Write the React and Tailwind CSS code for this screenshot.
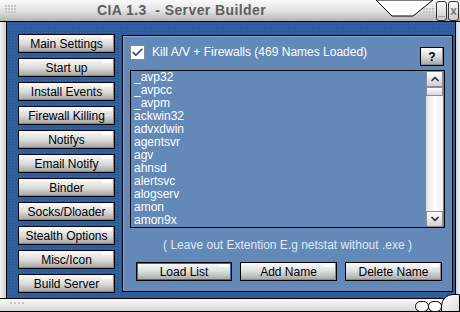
import { ChevronUp, ChevronDown, Check } from "lucide-react";

const sideItems = [
  "Main Settings",
  "Start up",
  "Install Events",
  "Firewall Killing",
  "Notifys",
  "Email Notify",
  "Binder",
  "Socks/Dloader",
  "Stealth Options",
  "Misc/Icon",
  "Build Server",
];

const names = [
  "_avp32",
  "_avpcc",
  "_avpm",
  "ackwin32",
  "advxdwin",
  "agentsvr",
  "agv",
  "ahnsd",
  "alertsvc",
  "alogserv",
  "amon",
  "amon9x",
];

const SkinButton = ({ children, className = "", focused }) => (
  <button
    className={`relative h-[19px] border border-black bg-gradient-to-b from-[#fbfbfb] via-[#dcdcdc] to-[#a4a4a4] text-[12px] leading-none text-black ${
      focused ? "shadow-[inset_0_0_0_1px_#3a6aa8]" : "shadow-[inset_-1px_-1px_0_#8a8a8a]"
    } ${className}`}
  >
    <span className="absolute right-[2px] top-[1px] h-[3px] w-[10px] rounded-full bg-white/90" />
    {children}
  </button>
);

const Grip = ({ className = "" }) => (
  <div className={`grid grid-cols-4 gap-[1px] ${className}`}>
    {Array.from({ length: 12 }).map((_, i) => (
      <span key={i} className="h-[2px] w-[2px] bg-[#c4c4c4]" />
    ))}
  </div>
);

export default function App() {
  return (
    <div className="flex h-[312px] w-[460px] flex-col overflow-hidden bg-[#d6d6d6] font-['Liberation_Sans',Arial,sans-serif]">
      {/* title bar */}
      <div className="relative flex h-[22px] shrink-0 items-center border-b border-black bg-gradient-to-b from-[#fafafa] via-[#e4e4e4] to-[#b4b4b4] pl-[97px]">
        <Grip className="absolute left-[5px] top-[5px]" />
        <span className="text-[14px] font-bold tracking-[0.4px] text-[#5e5e5e]">
          CIA 1.3&nbsp;&nbsp;- Server Builder
        </span>
        <svg className="absolute left-[376px] top-0" width="58" height="17" viewBox="0 0 58 17">
          <polygon points="0,0 16,16 37,16 57,0" fill="#ffffff" stroke="#000" strokeWidth="1" />
        </svg>
        <Grip className="absolute left-[423px] top-[8px]" />
        <div className="absolute right-[13px] top-[1px] flex h-[20px] w-[11px] items-center justify-center rounded-[3px] border border-[#333] bg-gradient-to-b from-white to-[#c8c8c8] text-[12px] font-bold leading-none text-[#777]">
          _
        </div>
        <div className="absolute right-[1px] top-[1px] flex h-[20px] w-[11px] items-center justify-center rounded-[3px] border border-[#333] bg-gradient-to-b from-white to-[#c8c8c8] text-[12px] font-bold leading-none text-[#777]">
          x
        </div>
      </div>

      {/* middle */}
      <div className="flex flex-1">
        <div className="w-[7px] border-r border-black bg-gradient-to-r from-[#f2f2f2] to-[#cfcfcf]" />
        <div className="flex flex-1 bg-[#2c5c9b] bg-[radial-gradient(#3b6bab_0.8px,transparent_0.8px)] bg-[length:3px_3px] pl-[11px] pt-[12px]">
          {/* sidebar */}
          <div className="flex w-[97px] flex-col gap-[5px]">
            {sideItems.map((item) => (
              <SkinButton key={item} className="w-[97px]">
                {item}
              </SkinButton>
            ))}
          </div>

          {/* panel */}
          <div className="ml-[7px] mt-[1px] flex h-[257px] w-[331px] flex-col border border-black bg-[#6389b8] px-[7px] shadow-[inset_1px_1px_0_#86a6cc]">
            <div className="mt-[9px] flex h-[22px] items-start">
              <div className="flex h-[15px] w-[15px] items-center justify-center border border-[#8a8a8a] bg-white">
                <Check size={13} strokeWidth={3} className="text-[#1f3f7a]" />
              </div>
              <span className="ml-[7px] text-[12px] leading-[15px] text-white">
                Kill A/V + Firewalls (469 Names Loaded)
              </span>
              <SkinButton className="ml-auto mr-[1px] mt-[2px] w-[24px] font-bold">?</SkinButton>
            </div>

            <div className="mt-[3px] flex h-[158px] border border-black">
              <div className="flex-1 pl-[3px] text-[12px] leading-[13px] text-white">
                {names.map((n) => (
                  <div key={n}>{n}</div>
                ))}
              </div>
              <div className="mr-[1px] flex w-[17px] flex-col bg-gradient-to-r from-[#dcdce4] via-[#ffffff] to-[#f2f2f6]">
                <div className="flex h-[16px] items-center justify-center border border-[#8a8a9a] bg-gradient-to-b from-[#ffffff] to-[#cfd0d8]">
                  <ChevronUp size={12} strokeWidth={3.5} className="text-[#333]" />
                </div>
                <div className="h-[9px] border border-[#8a8a9a] bg-gradient-to-b from-[#ffffff] to-[#d6d6de]" />
                <div className="flex-1" />
                <div className="flex h-[16px] items-center justify-center border border-[#8a8a9a] bg-gradient-to-b from-[#ffffff] to-[#cfd0d8]">
                  <ChevronDown size={12} strokeWidth={3.5} className="text-[#333]" />
                </div>
              </div>
            </div>

            <div className="mt-[7px] text-center text-[12px] leading-[20px] text-[#dfe8f3]">
              ( Leave out Extention E.g netstat without .exe )
            </div>

            <div className="ml-[6px] mt-[7px] flex gap-[8px]">
              <SkinButton className="w-[96px]" focused>
                Load List
              </SkinButton>
              <SkinButton className="w-[97px]">Add Name</SkinButton>
              <SkinButton className="w-[97px]">Delete Name</SkinButton>
            </div>
          </div>
        </div>
        <div className="w-[5px] border-l border-black bg-gradient-to-r from-[#d0d0d0] to-[#f0f0f0]" />
      </div>

      {/* bottom bar */}
      <div className="relative h-[14px] shrink-0 border-t border-black bg-gradient-to-b from-[#fafafa] to-[#d4d4d4] shadow-[inset_0_-1px_0_#000]">
        <div className="absolute left-[10px] top-[3px] flex gap-[2px]">
          {Array.from({ length: 4 }).map((_, i) => (
            <span key={i} className="h-[2px] w-[2px] bg-[#c4c4c4]" />
          ))}
        </div>
        <div className="absolute right-[31px] top-[2px] h-[11px] w-[14px] rounded-full border border-black bg-white" />
        <div className="absolute right-[18px] top-[2px] h-[11px] w-[14px] rounded-full border border-black bg-white" />
        <div className="absolute right-[0px] top-[-5px] h-[18px] w-[19px] rounded-tl-[12px] border border-black bg-gradient-to-br from-white to-[#dcdcdc]" />
      </div>
    </div>
  );
}
